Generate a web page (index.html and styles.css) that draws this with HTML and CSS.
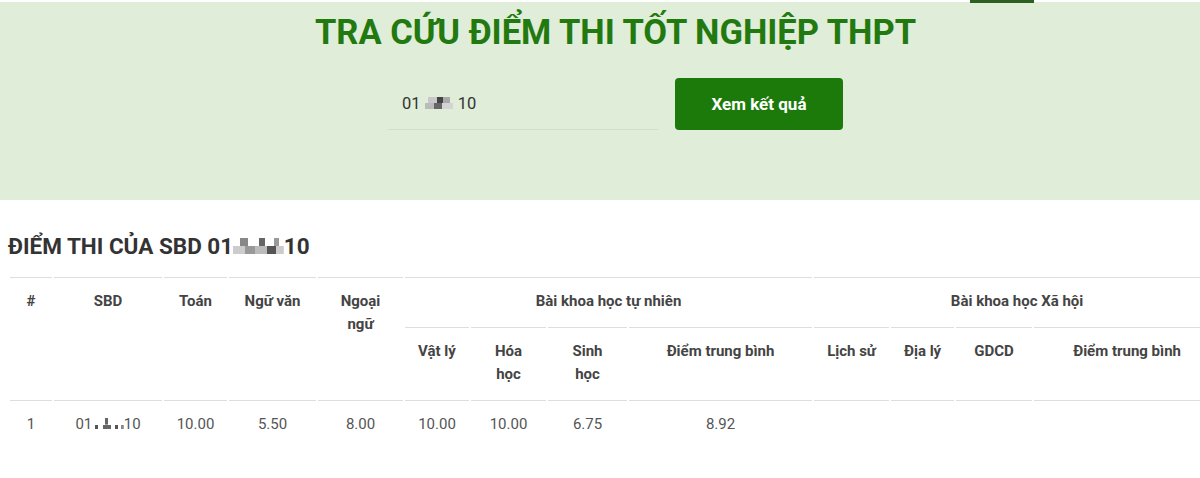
FILE: index.html
```html
<!DOCTYPE html>
<html lang="vi">

<head>
    <meta charset="UTF-8">
    <meta name="viewport" content="width=device-width, initial-scale=1.0">
    <title>Tra cứu điểm thi tốt nghiệp THPT</title>
    <link rel="stylesheet" href="styles.css">
</head>

<body>
    <div class="topline"><span class="tab-mark"></span></div>
    <div class="banner">
        <h1 class="title">TRA CỨU ĐIỂM THI TỐT NGHIỆP THPT</h1>
        <form class="search" onsubmit="return false">
            <div class="sbd-input">01<span class="mask mask-light"></span>10</div>
            <button class="btn-view" type="submit">Xem kết quả</button>
        </form>
    </div>

    <div class="result">
        <h2 class="result-title">ĐIỂM THI CỦA SBD 01<span class="mask"></span>10</h2>
        <table class="score-table">
            <colgroup>
                <col style="width:42px">
                <col style="width:108px">
                <col style="width:63px">
                <col style="width:87px">
                <col style="width:85px">
                <col style="width:64px">
                <col style="width:75px">
                <col style="width:79px">
                <col style="width:183px">
                <col style="width:75px">
                <col style="width:63px">
                <col style="width:76px">
                <col style="width:186px">
            </colgroup>
            <thead>
                <tr>
                    <th rowspan="2">#</th>
                    <th rowspan="2">SBD</th>
                    <th rowspan="2">Toán</th>
                    <th rowspan="2">Ngữ văn</th>
                    <th rowspan="2">Ngoại<br>ngữ</th>
                    <th colspan="4">Bài khoa học tự nhiên</th>
                    <th colspan="4">Bài khoa học Xã hội</th>
                </tr>
                <tr>
                    <th>Vật lý</th>
                    <th>Hóa<br>học</th>
                    <th>Sinh<br>học</th>
                    <th>Điểm trung bình</th>
                    <th>Lịch sử</th>
                    <th>Địa lý</th>
                    <th>GDCD</th>
                    <th>Điểm trung bình</th>
                </tr>
            </thead>
            <tbody>
                <tr>
                    <td>1</td>
                    <td>01<span class="mask mask-dots"></span>10</td>
                    <td>10.00</td>
                    <td>5.50</td>
                    <td>8.00</td>
                    <td>10.00</td>
                    <td>10.00</td>
                    <td>6.75</td>
                    <td>8.92</td>
                    <td></td>
                    <td></td>
                    <td></td>
                    <td></td>
                </tr>
            </tbody>
        </table>
    </div>
</body>

</html>
```

FILE: styles.css
```css
* {
    margin: 0;
    padding: 0;
}

html {
    overflow-x: hidden;
}

body {
    font-family: Roboto, "Liberation Sans", Arial, sans-serif;
    color: #333;
    background: #fff;
}

/* dải trên cùng */
.topline {
    height: 2px;
    background: #fff;
    display: flex;
}

.topline .tab-mark {
    width: 64px;
    height: 3px;
    margin-left: 970px;
    background: #2d5f22;
}

.banner {
    background: #dfedd9;
    padding: 10px 0 70px 31px;
    text-align: center;
}

.title {
    font-size: 34.5px;
    line-height: 40px;
    font-weight: 700;
    color: #22790f;
}

.search {
    margin-top: 26px;
    display: flex;
    justify-content: center;
    gap: 17px;
}

.sbd-input {
    width: 270px;
    height: 52px;
    box-sizing: border-box;
    padding: 0 14px;
    border-bottom: 1px solid #cfe0c9;
    font-size: 16.5px;
    line-height: 51px;
    color: #333;
    text-align: left;
}

.btn-view {
    width: 168px;
    height: 52px;
    border: 0;
    border-radius: 4px;
    background: #1c7a0b;
    color: #fff;
    font-family: inherit;
    font-size: 17px;
    font-weight: 700;
    cursor: pointer;
}

/* ô số báo danh bị che */
.mask {
    display: inline-block;
    width: 2.25em;
    height: .72em;
    background:
        linear-gradient(90deg, transparent 0 14%, #888 14% 30%, transparent 30% 52%, #666 52% 64%, transparent 64% 80%, #999 80% 90%, transparent 90%) top / 100% 50% no-repeat,
        linear-gradient(90deg, #ccc 0 24%, #999 24% 44%, #bbb 44% 68%, #555 68% 84%, #ccc 84%) bottom / 100% 50% no-repeat;
}

.mask-light {
    background:
        linear-gradient(90deg, transparent 0 20%, #c8c8c8 20% 42%, #444 42% 60%, #aaa 60% 78%, transparent 78%) top / 100% 50% no-repeat,
        linear-gradient(90deg, transparent 0 10%, #bbb 10% 36%, #666 36% 56%, #d4d4d4 56% 86%, transparent 86%) bottom / 100% 50% no-repeat;
}

.mask-dots {
    width: 2.1em;
    background:
        linear-gradient(90deg, transparent 0 40%, #666 40% 52%, transparent 52%) top / 100% 60% no-repeat,
        linear-gradient(90deg, transparent 0 10%, #555 10% 20%, transparent 20% 34%, #666 34% 60%, transparent 60% 72%, #555 72% 82%, transparent 82% 90%, #888 90%) bottom / 100% 40% no-repeat;
}

/* kết quả */
.result {
    padding: 0 8px;
}

.result-title {
    margin: 34px 0 17px;
    font-size: 22.5px;
    line-height: 24px;
    font-weight: 700;
    color: #333;
}

.score-table {
    width: 1214px;
    table-layout: fixed;
    border-collapse: separate;
    border-spacing: 2px;
}

.score-table th,
.score-table td {
    box-sizing: border-box;
    border-top: 1px solid #dedede;
    padding: 12px 8px;
    line-height: 23px;
    text-align: center;
    vertical-align: top;
}

.score-table th {
    font-size: 15px;
    font-weight: 700;
    color: #444;
}

.score-table td {
    font-size: 15px;
    color: #555;
}
```
